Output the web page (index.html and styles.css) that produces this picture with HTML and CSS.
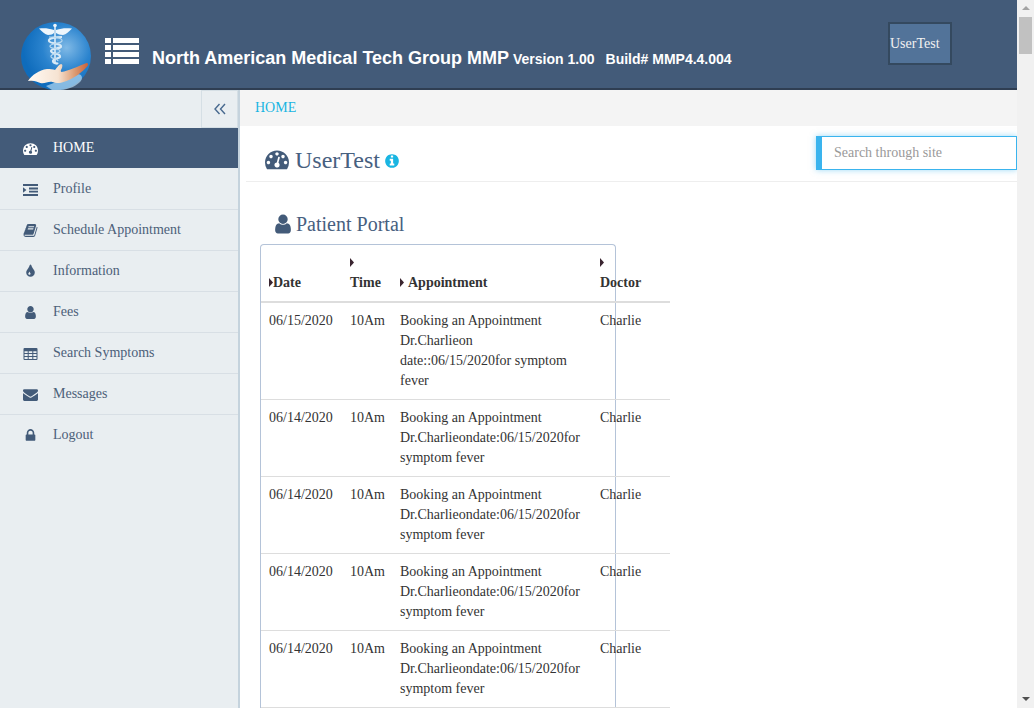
FILE: index.html
```html
<!DOCTYPE html>
<html lang="en">
<head>
  <meta charset="UTF-8">
  <meta name="viewport" content="width=device-width, initial-scale=1.0">
  <title>Patient Portal</title>
  <link rel="stylesheet" href="styles.css">
</head>
<body>
  <svg class="icon-defs" xmlns="http://www.w3.org/2000/svg">
    <symbol id="i-dashboard" viewBox="0 0 1792 1792"><path d="M384 1152q0-53-37.5-90.5t-90.5-37.5-90.5 37.5-37.5 90.5 37.5 90.5 90.5 37.5 90.5-37.5 37.5-90.5zm192-448q0-53-37.5-90.5t-90.5-37.5-90.5 37.5-37.5 90.5 37.5 90.5 90.5 37.5 90.5-37.5 37.5-90.5zm428 481l101-382q6-26-7.5-48.5t-38.5-29.5-48 6.5-30 39.5l-101 382q-60 5-107 43.5t-63 98.5q-20 77 20 146t117 89 146-20 89-117q16-60-6-117t-72-91zm660-33q0-53-37.5-90.5t-90.5-37.5-90.5 37.5-37.5 90.5 37.5 90.5 90.5 37.5 90.5-37.5 37.5-90.5zm-640-640q0-53-37.5-90.5t-90.5-37.5-90.5 37.5-37.5 90.5 37.5 90.5 90.5 37.5 90.5-37.5 37.5-90.5zm448 192q0-53-37.5-90.5t-90.5-37.5-90.5 37.5-37.5 90.5 37.5 90.5 90.5 37.5 90.5-37.5 37.5-90.5zm320 448q0 261-141 483-19 29-54 29h-1402q-35 0-54-29-141-221-141-483 0-182 71-348t191-286 286-191 348-71 348 71 286 191 191 286 71 348z"/></symbol>
    <symbol id="i-indent" viewBox="0 0 15 15"><path d="M0 2h15v2H0zM6 5.600h9v1.800H6zM6 8.800h9v1.800H6zM0 12h15v2H0zM0 5.200L3.400 8 0 10.800z"/></symbol>
    <symbol id="i-book" viewBox="0 0 1792 1792"><path d="M1703 478q40 57 18 129l-275 906q-19 64-76.5 107.5t-122.5 43.5h-923q-77 0-148.5-53.5t-99.5-131.5q-24-67-2-127 0-4 3-27t4-37q1-8-3-21.5t-3-19.5q2-11 8-21t16.5-23.5 16.5-23.5q23-38 45-91.5t30-91.5q3-10 .5-30t-.5-28q3-11 17-28t17-23q21-36 42-92t25-90q1-9-2.5-32t.5-28q4-13 22-30.5t22-22.5q19-26 42.5-84.5t27.5-96.5q1-8-3-25.5t-2-26.5q2-8 9-18t18-23 17-21q8-12 16.5-30.5t15-35 16-36 19.5-32 26.5-23.5 36-11.5 47.5 5.5l-1 3q38-9 51-9h761q74 0 114 56t18 130l-274 906q-36 119-71.5 153.5t-128.5 34.5h-869q-27 0-38 15-11 16-1 43 24 70 144 70h923q29 0 56-15.5t35-41.5l300-987q7-22 5-57 38 15 59 43zm-1064 2q-4 13 2 22.5t20 9.5h608q13 0 25.5-9.5t16.5-22.5l21-64q4-13-2-22.5t-20-9.5h-608q-13 0-25.5 9.5t-16.5 22.5zm-83 256q-4 13 2 22.5t20 9.5h608q13 0 25.5-9.5t16.5-22.5l21-64q4-13-2-22.5t-20-9.5h-608q-13 0-25.5 9.5t-16.5 22.5z"/></symbol>
    <symbol id="i-tint" viewBox="0 0 1792 1792"><path d="M896 1152q0-36-20-69-1-1-15.5-22.5t-25.5-38-25-44-21-50.5q-4-16-21-16t-21 16q-7 23-21 50.5t-25 44-25.5 38-15.5 22.5q-20 33-20 69 0 53 37.5 90.5t90.5 37.5 90.5-37.5 37.5-90.5zm512-128q0 212-150 362t-362 150-362-150-150-362q0-145 81-275 6-9 62.5-90.5t101-151 99.5-178 83-201.5q9-30 34-47t51-17 51.5 17 33.5 47q28 93 83 201.5t99.5 178 101 151 62.5 90.5q81 127 81 275z"/></symbol>
    <symbol id="i-user" viewBox="0 0 1792 1792"><path d="M1536 1399q0 109-62.5 187t-150.5 78h-854q-88 0-150.5-78t-62.5-187q0-85 8.5-160.5t31.5-152 58.5-131 94-89 134.5-34.5q131 128 313 128t313-128q76 0 134.5 34.5t94 89 58.5 131 31.5 152 8.5 160.5zm-256-887q0 159-112.5 271.5t-271.5 112.5-271.5-112.5-112.5-271.5 112.5-271.5 271.5-112.5 271.5 112.5 112.5 271.5z"/></symbol>
    <symbol id="i-table" viewBox="0 0 15 15"><path fill-rule="evenodd" d="M1.500 2h12a1 1 0 0 1 1 1v10a1 1 0 0 1-1 1h-12a1 1 0 0 1-1-1V3a1 1 0 0 1 1-1zM1.500 5.200v1.900h3.200V5.200zM5.700 5.200v1.900h3.600V5.200zM10.300 5.200v1.900h3.200V5.200zM1.500 8.100V10h3.200V8.100zM5.700 8.100V10h3.600V8.100zM10.300 8.100V10h3.200V8.100zM1.500 11v2h3.200v-2zM5.700 11v2h3.600v-2zM10.300 11v2h3.200v-2z"/></symbol>
    <symbol id="i-envelope" viewBox="0 0 1792 1792"><path d="M1792 710v794q0 66-47 113t-113 47h-1472q-66 0-113-47t-47-113v-794q44 49 101 87 362 246 497 345 57 42 92.5 65.5t94.5 48 110 24.5h2q51 0 110-24.5t94.5-48 92.5-65.5q170-123 498-345 57-39 100-87zm0-294q0 79-49 151t-122 123q-376 261-468 325-10 7-42.5 30.5t-54 38-52 32.5-57.5 27-50 9h-2q-23 0-50-9t-57.5-27-52-32.5-54-38-42.5-30.5q-91-64-262-182.5t-205-142.5q-62-42-117-115.5t-55-136.5q0-78 41.5-130t118.5-52h1472q65 0 112.5 47t47.5 113z"/></symbol>
    <symbol id="i-lock" viewBox="0 0 1792 1792"><path d="M640 768h512v-192q0-106-75-181t-181-75-181 75-75 181v192zm832 96v576q0 40-28 68t-68 28h-960q-40 0-68-28t-28-68v-576q0-40 28-68t68-28h32v-192q0-184 132-316t316-132 316 132 132 316v192h32q40 0 68 28t28 68z"/></symbol>
    <symbol id="i-info" viewBox="0 0 1792 1792"><path d="M1152 1376v-160q0-14-9-23t-23-9h-96v-512q0-14-9-23t-23-9h-320q-14 0-23 9t-9 23v160q0 14 9 23t23 9h96v320h-96q-14 0-23 9t-9 23v160q0 14 9 23t23 9h448q14 0 23-9t9-23zm-128-896v-160q0-14-9-23t-23-9h-192q-14 0-23 9t-9 23v160q0 14 9 23t23 9h192q14 0 23-9t9-23zm640 416q0 209-103 385.5t-279.5 279.5-385.5 103-385.5-103-279.5-279.5-103-385.5 103-385.5 279.5-279.5 385.5-103 385.5 103 279.5 279.5 103 385.5z"/></symbol>
    <symbol id="i-sort" viewBox="0 0 4 9"><path d="M0 0l4 4.500L0 9z"/></symbol>
  </svg>

  <div class="page">
    <header class="topbar">
      <svg class="logo" viewBox="0 0 70 68" xmlns="http://www.w3.org/2000/svg">
        <defs>
          <radialGradient id="logo-bg" cx="0.65" cy="0.38" r="0.62">
            <stop offset="0" stop-color="#7fb9e6"/>
            <stop offset="0.55" stop-color="#2a83ce"/>
            <stop offset="1" stop-color="#0f6cbc"/>
          </radialGradient>
          <linearGradient id="logo-hand" x1="0" y1="0" x2="1" y2="0">
            <stop offset="0" stop-color="#fffaf4"/>
            <stop offset="0.5" stop-color="#f6e3d2"/>
            <stop offset="0.78" stop-color="#dc9a70"/>
            <stop offset="1" stop-color="#c9603a"/>
          </linearGradient>
          <filter id="logo-soft"><feGaussianBlur stdDeviation="0.35"/></filter>
        </defs>
        <ellipse cx="35" cy="34" rx="35" ry="34" fill="url(#logo-bg)"/>
        <g filter="url(#logo-soft)">
          <path d="M34 5v36" stroke="#dcecf8" stroke-width="1.600"/>
          <circle cx="34" cy="3.500" r="1.800" fill="#eef6fc"/>
          <path d="M33 8C27 6 23 6 18 6.500c3 3 6 6 9 6.500 3 0 5-1 6-2zM35 8c6-2 10-2 16-1.500-3 3-6 6-9 6.500-3 0-5-1-7-2z" fill="#eef6fc"/>
          <path d="M41 15c-6 0-14 1-13 4s11 2 12 5-10 2-10 5 8 2 9 5-7 2-7 5 4 2 5 3" fill="none" stroke="#d8eaf7" stroke-width="2.200"/>
          <path d="M28 15c6 0 14 1 13 4s-11 2-12 5 10 2 10 5-8 2-9 5 7 2 7 5" fill="none" stroke="#b9d9f0" stroke-width="1.200"/>
          <path d="M56 52c6 0 6 5 3 8-6 6-16 9-28 8l-6-4z" fill="#b5d8f1" opacity="0.7"/>
          <path d="M7 59c4-6 11-11 19-12 3 0 6 0 8 1 2-2 3-5 6-6 2 0 1.500 3 .5 5-1 1.500-1 2.500 0 3 7-1 17-6 25-9 2 0 2 2 1 3-5 6-13 12-21 15-5 2-10 3-14 1-4-1-8 2-12 1-4-1-6-3-12-2z" fill="url(#logo-hand)"/>
        </g>
      </svg>
      <svg class="menu-icon" viewBox="0 0 34 26" xmlns="http://www.w3.org/2000/svg">
        <path d="M0 0h6v5H0zM8 0h26v5H8zM0 7h6v5H0zM8 7h26v5H8zM0 14h6v5H0zM8 14h26v5H8zM0 21h6v5H0zM8 21h26v5H8z"/>
      </svg>
      <div class="brand">
        <span class="brand-name">North American Medical Tech Group MMP</span>
        <span class="brand-version">Version 1.00</span>
        <span class="brand-build">Build# MMP4.4.004</span>
      </div>
      <button class="user-btn">UserTest</button>
    </header>

    <div class="layout">
      <aside class="sidebar">
        <div class="sidebar-toggle-row">
          <div class="sidebar-toggle">
            <svg viewBox="0 0 12 12" xmlns="http://www.w3.org/2000/svg"><path d="M5.500 1L1 6l4.500 5M11 1L6.500 6l4.500 5"/></svg>
          </div>
        </div>
        <ul class="nav">
          <li class="nav-item active"><svg class="nav-icon"><use href="#i-dashboard"/></svg>HOME</li>
          <li class="nav-item"><svg class="nav-icon"><use href="#i-indent"/></svg>Profile</li>
          <li class="nav-item"><svg class="nav-icon"><use href="#i-book"/></svg>Schedule Appointment</li>
          <li class="nav-item"><svg class="nav-icon"><use href="#i-tint"/></svg>Information</li>
          <li class="nav-item"><svg class="nav-icon"><use href="#i-user"/></svg>Fees</li>
          <li class="nav-item"><svg class="nav-icon"><use href="#i-table"/></svg>Search Symptoms</li>
          <li class="nav-item"><svg class="nav-icon"><use href="#i-envelope"/></svg>Messages</li>
          <li class="nav-item"><svg class="nav-icon"><use href="#i-lock"/></svg>Logout</li>
        </ul>
      </aside>

      <main class="content">
        <div class="crumb"><a class="crumb-link">HOME</a></div>

        <div class="title-row">
          <h1 class="page-title">
            <svg class="title-icon"><use href="#i-dashboard"/></svg>UserTest
            <svg class="info-icon"><use href="#i-info"/></svg>
          </h1>
          <input class="search" type="text" placeholder="Search through site">
        </div>

        <section class="portal">
          <h2 class="portal-title"><svg class="portal-icon"><use href="#i-user"/></svg>Patient Portal</h2>
          <div class="table-card">
            <table class="appts">
              <thead>
                <tr>
                  <th class="col-date"><svg class="sort"><use href="#i-sort"/></svg>Date</th>
                  <th class="col-time"><svg class="sort sort-block"><use href="#i-sort"/></svg>Time</th>
                  <th class="col-appt"><svg class="sort sort-gap"><use href="#i-sort"/></svg>Appointment</th>
                  <th class="col-doc"><svg class="sort sort-block"><use href="#i-sort"/></svg>Doctor</th>
                </tr>
              </thead>
              <tbody>
                <tr>
                  <td>06/15/2020</td><td>10Am</td>
                  <td>Booking an Appointment Dr.Charlieon date::06/15/2020for symptom fever</td>
                  <td>Charlie</td>
                </tr>
                <tr>
                  <td>06/14/2020</td><td>10Am</td>
                  <td>Booking an Appointment Dr.Charlieondate:06/15/2020for symptom fever</td>
                  <td>Charlie</td>
                </tr>
                <tr>
                  <td>06/14/2020</td><td>10Am</td>
                  <td>Booking an Appointment Dr.Charlieondate:06/15/2020for symptom fever</td>
                  <td>Charlie</td>
                </tr>
                <tr>
                  <td>06/14/2020</td><td>10Am</td>
                  <td>Booking an Appointment Dr.Charlieondate:06/15/2020for symptom fever</td>
                  <td>Charlie</td>
                </tr>
                <tr>
                  <td>06/14/2020</td><td>10Am</td>
                  <td>Booking an Appointment Dr.Charlieondate:06/15/2020for symptom fever</td>
                  <td>Charlie</td>
                </tr>
              </tbody>
            </table>
          </div>
        </section>
      </main>
    </div>
  </div>

  <div class="scrollbar">
    <div class="scroll-arrow scroll-up"></div>
    <div class="scroll-thumb"></div>
    <div class="scroll-track"></div>
    <div class="scroll-arrow scroll-down"></div>
  </div>
</body>
</html>
```

FILE: styles.css
```css
* {
  box-sizing: border-box;
}

html, body {
  height: 100%;
}

body {
  display: flex;
  margin: 0;
  overflow: hidden;
  background: #fff;
  font-family: "Liberation Serif", serif;
  font-size: 14px;
  color: #333;
}

.icon-defs {
  display: none;
}

.page {
  flex: 1;
  min-width: 0;
  height: 708px;
  overflow: hidden;
}

/* top bar */
.topbar {
  display: flex;
  height: 90px;
  padding: 0 65px 0 21px;
  background: #435b79;
  border-bottom: 2px solid #2f3e52;
}

.logo {
  flex: none;
  width: 70px;
  height: 68px;
  margin-top: 22px;
}

.menu-icon {
  flex: none;
  width: 34px;
  height: 26px;
  margin: 38px 0 0 14px;
  fill: #fff;
}

.brand {
  flex: 1;
  margin: 48px 0 0 13px;
  font-family: "Liberation Sans", sans-serif;
  font-weight: bold;
  color: #fff;
  white-space: nowrap;
}

.brand-name {
  font-size: 18px;
}

.brand-version {
  font-size: 14px;
}

.brand-build {
  margin-left: 7px;
  font-size: 14px;
}

.user-btn {
  flex: none;
  width: 64px;
  height: 43px;
  margin-top: 22px;
  padding: 0;
  background: #527399;
  border: 2px solid #34495f;
  color: #f2f2f2;
  font-family: "Liberation Serif", serif;
  font-size: 14px;
  text-align: left;
}

.layout {
  display: flex;
  height: 618px;
}

/* sidebar */
.sidebar {
  flex: none;
  width: 240px;
  background: #e9eef1;
  border-right: 2px solid #c5d3dd;
}

.sidebar-toggle-row {
  display: flex;
  justify-content: flex-end;
  height: 38px;
}

.sidebar-toggle {
  display: flex;
  align-items: center;
  justify-content: center;
  width: 37px;
  height: 38px;
  border: 1px solid #d5dfe5;
}

.sidebar-toggle svg {
  width: 12px;
  height: 12px;
  fill: none;
  stroke: #47698f;
  stroke-width: 1.400;
}

.nav {
  margin: 0;
  padding: 0;
  list-style: none;
}

.nav-item {
  display: flex;
  align-items: center;
  height: 41px;
  padding-left: 23px;
  border-bottom: 1px solid #d8dfe5;
  color: #4c6079;
}

.nav-item:last-child {
  border-bottom-color: transparent;
}

.nav-item.active {
  background: #435b79;
  border-bottom-color: #e9eef1;
  color: #fff;
}

.nav-icon {
  flex: none;
  width: 15px;
  height: 15px;
  margin-right: 15px;
  fill: #435b79;
}

.active .nav-icon {
  fill: #fff;
}

/* main column */
.content {
  flex: 1;
  min-width: 0;
}

.crumb {
  height: 36px;
  padding: 9px 15px 0;
  background: #f4f4f4;
  line-height: 17px;
}

.crumb-link {
  color: #19b5e2;
}

.title-row {
  display: flex;
  justify-content: space-between;
  height: 56px;
  margin-left: 6px;
  padding: 10px 0 0 19px;
  border-bottom: 1px solid #eee;
}

.page-title {
  display: flex;
  align-items: center;
  height: 48px;
  margin: 0;
  font-size: 24px;
  font-weight: normal;
  color: #47607f;
}

.title-icon {
  width: 24px;
  height: 24px;
  margin: -2px 6px 0 0;
  fill: #435b79;
}

.info-icon {
  width: 16px;
  height: 16px;
  margin: 2px 0 0 4px;
  fill: #19b5e2;
}

.search {
  width: 201px;
  height: 34px;
  padding: 0 0 0 12px;
  background: #fff;
  border: 1px solid #3ab4ee;
  border-left-width: 6px;
  box-shadow: 0 0 6px rgba(58, 180, 238, 0.5);
  font-family: "Liberation Serif", serif;
  font-size: 14px;
  outline: none;
}

.search::placeholder {
  color: #999;
}

.portal {
  padding: 30px 0 0 20px;
}

.portal-title {
  display: flex;
  align-items: center;
  height: 24px;
  margin: 0 0 8px 12px;
  font-size: 20px;
  font-weight: normal;
  color: #47607f;
}

.portal-icon {
  width: 22px;
  height: 22px;
  margin-right: 2px;
  fill: #435b79;
}

.table-card {
  width: 356px;
  border: 1px solid #b4c3d8;
  border-bottom: 0;
  border-radius: 4px 4px 0 0;
}

.appts {
  width: 409px;
  table-layout: fixed;
  border-collapse: collapse;
}

.appts th {
  padding: 8px;
  border-bottom: 2px solid #ddd;
  line-height: 20px;
  text-align: left;
  vertical-align: bottom;
}

.appts td {
  padding: 8px;
  border-bottom: 1px solid #ddd;
  line-height: 20px;
  vertical-align: top;
}

.col-date {
  width: 81px;
}

.col-time {
  width: 50px;
}

.col-appt {
  width: 200px;
}

.col-doc {
  width: 78px;
}

.sort {
  width: 4px;
  height: 9px;
  fill: #3a2530;
}

.sort-block {
  display: block;
  margin: 5px 0 6px;
}

.sort-gap {
  margin-right: 4px;
}

/* fake scrollbar, same as the browser one */
.scrollbar {
  display: flex;
  flex: none;
  flex-direction: column;
  align-items: center;
  width: 17px;
  height: 708px;
  background: #f1f1f1;
}

.scroll-arrow {
  flex: none;
  width: 100%;
  height: 17px;
}

.scroll-up::after,
.scroll-down::after {
  content: "";
  display: block;
  width: 0;
  margin: 6px auto 0;
  border-left: 4px solid transparent;
  border-right: 4px solid transparent;
}

.scroll-up::after {
  border-bottom: 4px solid #a3a3a3;
}

.scroll-down::after {
  border-top: 4px solid #505050;
}

.scroll-thumb {
  flex: none;
  width: 13px;
  height: 37px;
  background: #c1c1c1;
}

.scroll-track {
  flex: 1;
}
```
